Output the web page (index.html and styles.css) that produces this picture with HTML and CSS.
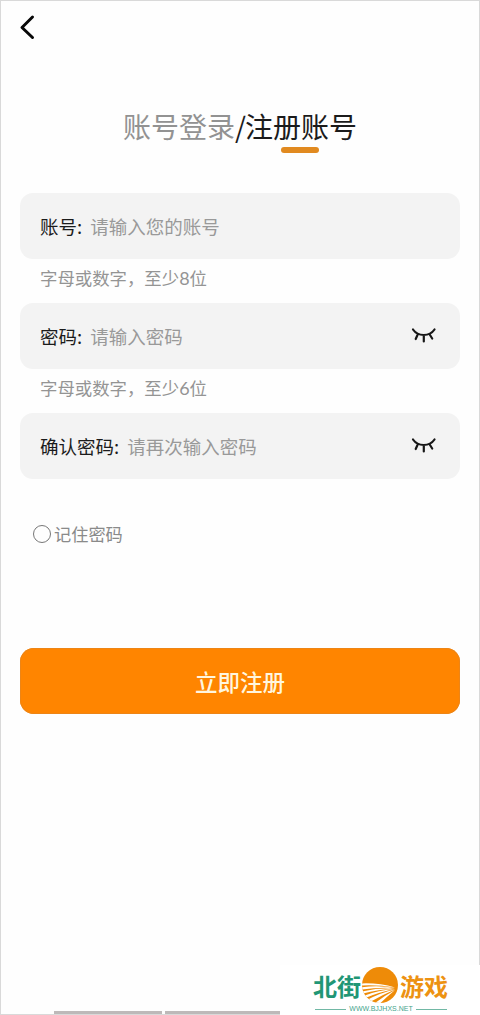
FILE: index.html
```
<!DOCTYPE html>
<html lang="zh-CN">
<head>
<meta charset="utf-8">
<title>注册账号</title>
<link rel="stylesheet" href="styles.css">
</head>
<body>
<main class="screen">
  <header class="topbar">
    <svg class="back" width="20" height="28" viewBox="0 0 20 28"><path d="M14.500 4 4 14.500l10.500 10"/></svg>
  </header>
  <nav class="tabs">
    <span class="tab">账号登录</span><span class="slash">/</span><span class="tab active">注册账号</span>
  </nav>
  <div class="indicator"></div>
  <form class="form">
    <div class="field"><span class="label">账号:</span><span class="hint">请输入您的账号</span></div>
    <p class="note">字母或数字，至少<b>8</b>位</p>
    <div class="field"><span class="label">密码:</span><span class="hint">请输入密码</span>
      <svg class="eye" width="26" height="18" viewBox="0 0 26 18"><path d="M2 2.500C7 9.800 18.500 9.800 23.500 2.500M6.500 8 4.700 12M12.800 8.500v6M19 8l2.200 3.500"/></svg></div>
    <p class="note">字母或数字，至少<b>6</b>位</p>
    <div class="field"><span class="label">确认密码:</span><span class="hint">请再次输入密码</span>
      <svg class="eye" width="26" height="18" viewBox="0 0 26 18"><path d="M2 2.500C7 9.800 18.500 9.800 23.500 2.500M6.500 8 4.700 12M12.800 8.500v6M19 8l2.200 3.500"/></svg></div>
    <div class="remember"><span class="radio"></span><span>记住密码</span></div>
    <div class="submit">立即注册</div>
  </form>
  <div class="bottom-lines"><i class="line-a"></i><i class="line-b"></i></div>
  <aside class="brand">
    <div class="brand-row">
      <span class="green">北街</span>
      <svg class="sun" width="38" height="38" viewBox="0 0 38 38">
        <defs><clipPath id="disc"><circle cx="19" cy="19" r="18"/></clipPath></defs>
        <g clip-path="url(#disc)">
          <path class="disc" d="M0 0h38v38H0z"/>
          <path class="rays" d="M-1 17.500Q17 16.500 34 21.500Q17 18.500-1 19.500zM-1 21.500Q17 19 34 22Q17 20.800-1 23.700zM-1 26Q17 21.500 34 22.500Q17 23.500-1 28.300zM1 30.500Q18 23.500 34 23Q18 26 3 32.500zM6 34Q20 26.500 34 23.500Q22 28.500 9 36zM14 37Q23 30 34 24Q25 31.500 18 38.500z"/>
        </g>
      </svg>
      <span class="orange">游戏</span>
    </div>
    <div class="site"><i></i><span>WWW.BJJHXS.NET</span><i></i></div>
  </aside>
</main>
</body>
</html>
```
FILE: styles.css
```
* { box-sizing: border-box; }
body {
  margin: 0;
  background: #fff;
  font-family: "Noto Sans CJK SC", sans-serif;
}
.screen {
  position: relative;
  width: 480px;
  height: 1015px;
  overflow: hidden;
  background: #fefefe;
}
.screen::after {
  content: "";
  position: absolute;
  inset: 0;
  border: 1px solid #d9d9d9;
}
.topbar { height: 99px; padding: 13px 0 0 18px; }
.back { display: block; }
.back path { fill: none; stroke: #080808; stroke-width: 3; stroke-linecap: round; stroke-linejoin: round; }
.tabs {
  display: flex;
  justify-content: center;
  height: 48px;
  line-height: 55px;
  font-size: 28px;
  color: #929292;
}
.slash { width: 10px; color: #1b1b1b; }
.active { color: #1b1b1b; }
.indicator { width: 38px; height: 6px; margin-left: 281px; border-radius: 3px; background: #e18a20; }
.form { padding: 40px 20px 0; }
.field {
  display: flex;
  align-items: center;
  height: 66px;
  padding: 0 23px 0 20px;
  border-radius: 13px;
  background: #f3f3f3;
  font-size: 18.5px;
}
.label { margin-right: 8px; color: #1b1b1b; }
.hint { color: #999; }
.eye { margin-left: auto; }
.eye path { fill: none; stroke: #171717; stroke-width: 2.2; stroke-linecap: round; }
.note {
  height: 44px;
  margin: 0;
  padding-left: 20px;
  line-height: 38px;
  font-size: 17.4px;
  color: #949494;
}
.note b { font-family: Lato, sans-serif; font-size: 18px; font-weight: 400; }
.remember {
  display: flex;
  align-items: center;
  gap: 3px;
  height: 30px;
  margin: 40px 0 0 13px;
  font-size: 17.2px;
  color: #8a8a8a;
}
.remember span:last-child { margin-top: -1px; }
.radio { width: 18px; height: 18px; border: 1.5px solid #777; border-radius: 50%; }
.submit {
  height: 66px;
  margin-top: 99px;
  border-radius: 14px;
  background: #ff8500;
  box-shadow: inset 0 0 0 1px #ed8516;
  color: #fff6df;
  font-size: 22.5px;
  font-weight: 500;
  line-height: 67px;
  text-align: center;
}
.bottom-lines { position: absolute; left: 54px; bottom: 1px; z-index: 1; display: flex; gap: 3px; }
.bottom-lines i { height: 3px; background: #bdb9b9; }
.line-a { width: 108px; }
.line-b { width: 115px; }
.brand {
  position: absolute;
  left: 280px;
  top: 965px;
  z-index: 2;
  width: 200px;
  height: 50px;
  padding: 1px 0 0 33px;
  background: #fff;
}
.brand-row { display: flex; align-items: center; height: 38px; font-size: 24px; font-weight: 700; }
.green { width: 48px; color: #219675; }
.orange { margin-left: 1px; color: #ed9212; }
.sun { display: block; }
.disc { fill: #ee8b08; }
.rays { fill: #fff; }
.site { display: flex; align-items: center; gap: 3px; width: 132px; height: 10px; margin-left: 2px; color: #45a48c; font: 7px/10px "Liberation Sans", sans-serif; }
.site i { flex: 1; height: 1px; background: #71b8a5; }
```
